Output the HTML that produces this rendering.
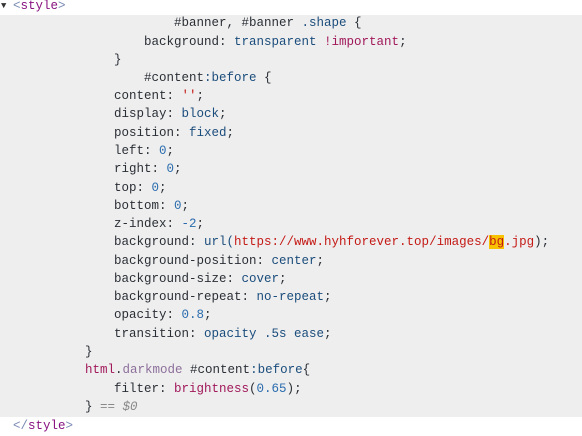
<!DOCTYPE html>
<html><head><style>
body{margin:0;width:582px;height:436px;background:#fff;font-family:"Liberation Mono",monospace;font-size:12.5px;color:#2a2f36;overflow:hidden;position:relative}
.band{position:absolute;left:0;top:15px;width:582px;height:402px;background:#eeeeee}
.l{position:absolute;white-space:pre;line-height:18px;height:18px}
.v{color:#1a4c7c}.s{color:#c41a16}.n{color:#2a6cad}.k{color:#a1185a}.c{color:#8d6f9b}.t{color:#881280}.b{color:#7a8ab4}.g{color:#888;font-style:italic}
.hl{background:#f8c200}
</style></head><body>
<div class="band"></div>
<div class="l" style="left:1px;top:-3px;font-size:9px;color:#333;line-height:18px">▼</div>
<div class="l" style="left:13px;top:-3px"><span class="b">&lt;</span><span class="t">style</span><span class="b">&gt;</span></div>
<div class="l" style="left:174px;top:14px">#banner, #banner <span class="v">.shape</span> {</div>
<div class="l" style="left:144px;top:33px">background: <span class="v">transparent</span> <span class="k">!important</span>;</div>
<div class="l" style="left:114px;top:51px">}</div>
<div class="l" style="left:144px;top:69px">#content<span class="v">:before</span> {</div>
<div class="l" style="left:114px;top:87px">content: <span class="s">''</span>;</div>
<div class="l" style="left:114px;top:105px">display: <span class="v">block</span>;</div>
<div class="l" style="left:114px;top:124px">position: <span class="v">fixed</span>;</div>
<div class="l" style="left:114px;top:142px">left: <span class="n">0</span>;</div>
<div class="l" style="left:114px;top:160px">right: <span class="n">0</span>;</div>
<div class="l" style="left:114px;top:179px">top: <span class="n">0</span>;</div>
<div class="l" style="left:114px;top:197px">bottom: <span class="n">0</span>;</div>
<div class="l" style="left:114px;top:215px">z-index: <span class="n">-2</span>;</div>
<div class="l" style="left:114px;top:233px">background: <span class="v">url(</span><span class="s">https://www.hyhforever.top/images/<span class="hl">bg</span>.jpg</span>);</div>
<div class="l" style="left:114px;top:252px">background-position: <span class="v">center</span>;</div>
<div class="l" style="left:114px;top:270px">background-size: <span class="v">cover</span>;</div>
<div class="l" style="left:114px;top:288px">background-repeat: <span class="v">no-repeat</span>;</div>
<div class="l" style="left:114px;top:306px">opacity: <span class="n">0.8</span>;</div>
<div class="l" style="left:114px;top:325px">transition: <span class="v">opacity .5s ease</span>;</div>
<div class="l" style="left:85px;top:343px">}</div>
<div class="l" style="left:85px;top:361px"><span class="k">html</span>.<span class="c">darkmode</span> #content<span class="v">:before</span>{</div>
<div class="l" style="left:114px;top:380px">filter: <span class="k">brightness</span>(<span class="n">0.65</span>);</div>
<div class="l" style="left:85px;top:398px">} <span class="g">== $0</span></div>
<div class="l" style="left:13px;top:417px"><span class="b">&lt;/</span><span class="t">style</span><span class="b">&gt;</span></div>
</body></html>
